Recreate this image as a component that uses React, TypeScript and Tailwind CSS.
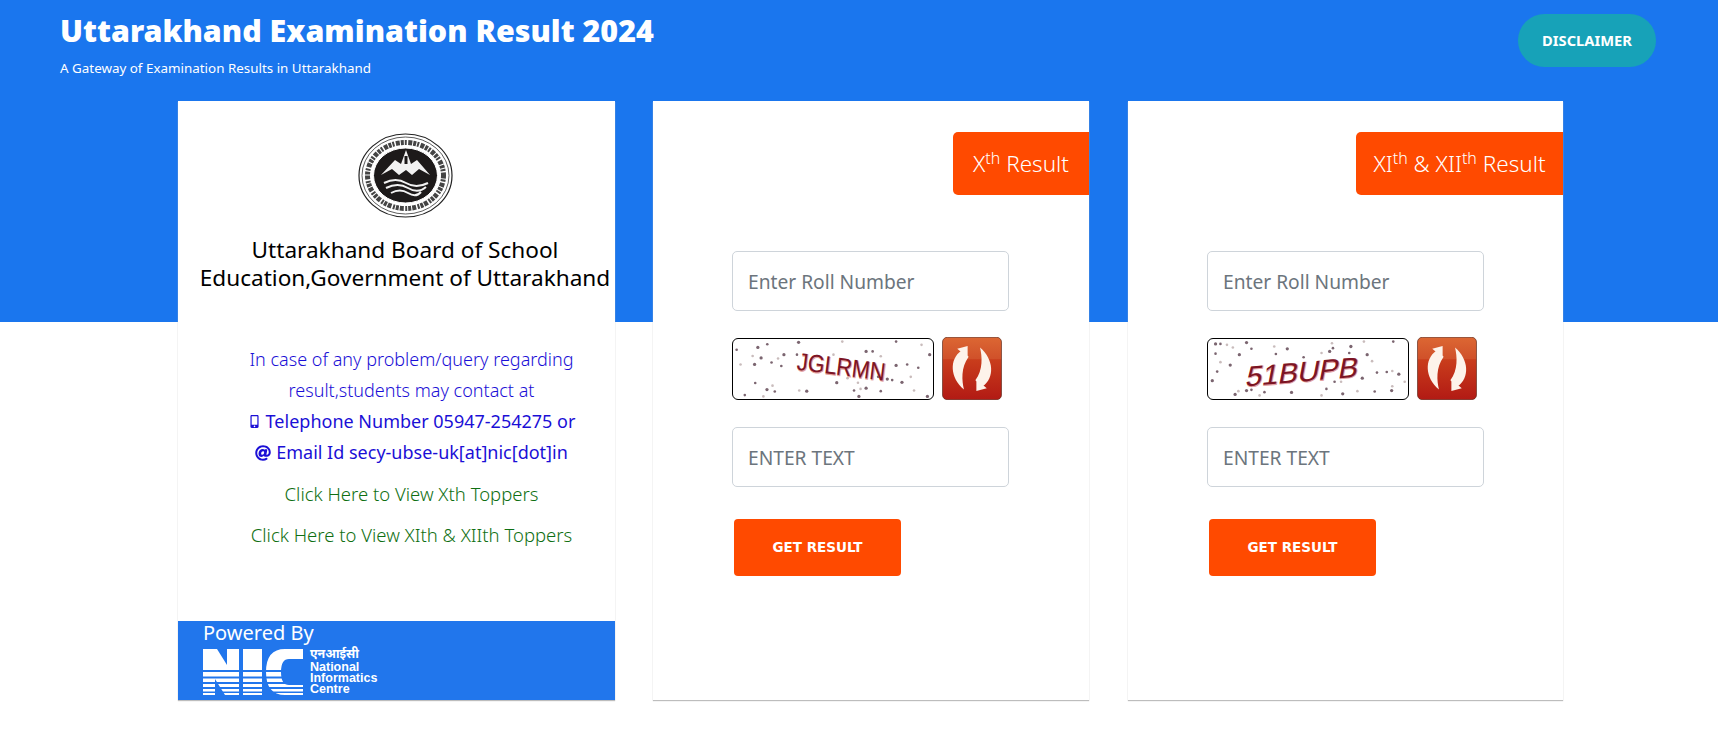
import React from 'react';
import { FaAt, FaMobileAlt } from 'react-icons/fa';

const bodyFont = 'font-["Noto_Sans",sans-serif]';

const captchaOne: [number, number][] = [
  [108, 78], [43, 85], [92, 104], [118, 110], [150, 124], [170, 112], [188, 100], [228, 100], [55, 130], [98, 130],
  [180, 135], [367, 60], [233, 62], [137, 68], [340, 100], [440, 90], [460, 90], [485, 105], [532, 133], [566, 130],
  [577, 168], [550, 185], [477, 168], [415, 186], [350, 186], [100, 187], [153, 195], [136, 207], [160, 213], [235, 210],
  [258, 212], [68, 224], [125, 228], [418, 228], [485, 212], [423, 205], [440, 203], [403, 210], [587, 210], [628, 228],
  [600, 140], [383, 172], [505, 175], [532, 60], [610, 70], [635, 100], [520, 178],
];

const captchaTwo: [number, number][] = [
  [55, 67], [70, 67], [90, 70], [150, 63], [165, 82], [108, 78], [128, 100], [55, 97], [70, 123], [100, 132],
  [240, 98], [235, 75], [275, 82], [325, 108], [380, 95], [405, 90], [415, 80], [412, 65], [470, 75], [465, 95],
  [510, 60], [520, 100], [600, 60], [535, 120], [505, 172], [580, 153], [597, 150], [617, 160], [550, 155], [635, 183],
  [45, 180], [60, 152], [597, 197], [595, 210], [543, 213], [490, 212], [445, 220], [395, 205], [380, 225], [288, 216],
  [205, 215], [190, 225], [150, 210], [165, 208], [125, 212], [115, 222], [420, 183], [440, 183],
];

function Emblem() {
  return (
    <svg width="95" height="85" viewBox="0 0 95 85" className="block">
      <ellipse cx="47.5" cy="42.5" rx="46.5" ry="41.5" fill="#fff" stroke="#222" strokeWidth="1.2" />
      <ellipse cx="47.5" cy="42.5" rx="43.5" ry="38.5" fill="none" stroke="#333" strokeWidth="0.8" />
      <ellipse cx="47.5" cy="42.5" rx="38" ry="33" fill="none" stroke="#444" strokeWidth="5" strokeDasharray="3 1 2 1.5 4 1" />
      <ellipse cx="47.5" cy="42.5" rx="32" ry="27.5" fill="#1d1a1a" stroke="#fff" strokeWidth="1" />
      <path d="M23 42 L37 27 L43 31 L48 17 L53 31 L59 27 L72 42 L61 36 L54 42 L48 37 L41 42 L34 36 Z" fill="#f2f2f2" />
      <path d="M46.5 23 h3 v8 h-3 z" fill="#1d1a1a" />
      <path d="M26 50 Q38 44 48 50 T70 50 M28 55 Q40 49 50 55 T68 54 M33 60 Q42 55 50 60 T63 59" fill="none" stroke="#f2f2f2" strokeWidth="2" />
    </svg>
  );
}

function NicLogo() {
  return (
    <svg width="100" height="46" viewBox="0 0 100 46" className="block">
      <defs>
        <clipPath id="nic-letters">
          <path d="M0 0 H14 L24 16 V0 H36 V46 H22 L12 30 V46 H0 Z" />
          <rect x="40" y="0" width="19" height="46" />
          <path d="M100 0 V10 H86 Q78 10 78 23 Q78 36 86 36 H100 V46 H82 Q63 46 63 23 Q63 0 82 0 Z" />
        </clipPath>
      </defs>
      <g clipPath="url(#nic-letters)">
        <rect width="100" height="21" fill="#fff" />
        <rect y="23" width="100" height="4.5" fill="#fff" />
        <rect y="29.5" width="100" height="3.5" fill="#fff" />
        <rect y="35" width="100" height="3" fill="#fff" />
        <rect y="40" width="100" height="2.5" fill="#fff" />
        <rect y="44" width="100" height="2" fill="#fff" />
      </g>
    </svg>
  );
}

function RefreshIcon() {
  return (
    <svg width="60" height="63" viewBox="667 49 178 188" className="block">
      <defs>
        <linearGradient id="refresh-bg" x1="0" y1="0" x2="0" y2="1">
          <stop offset="0" stopColor="#dc6733" />
          <stop offset="0.34" stopColor="#d0512a" />
          <stop offset="0.36" stopColor="#c93d1c" />
          <stop offset="1" stopColor="#b21a14" />
        </linearGradient>
      </defs>
      <rect x="668" y="50" width="176" height="186" rx="14" fill="url(#refresh-bg)" stroke="#5d2a1c" strokeWidth="2" />
      <g fill="#fdf3ea">
        <path d="M724 90 C688 115 690 170 732 206 C726 180 722 140 746 108 Z" />
        <path d="M712 84 L743 76 L743 110 Z" />
        <g transform="rotate(180 756 143)">
          <path d="M724 90 C688 115 690 170 732 206 C726 180 722 140 746 108 Z" />
          <path d="M712 84 L743 76 L743 110 Z" />
        </g>
      </g>
    </svg>
  );
}

function Captcha({ dots, text, kind }: { dots: [number, number][]; text: string; kind: 'plain' | 'italic' }) {
  return (
    <div className="w-[202px] h-[62px] rounded-md border border-black bg-white overflow-hidden">
      <svg width="200" height="60" viewBox="37 52 603 184" className="block">
        {dots.map(([x, y], i) => (
          <circle key={i} cx={x} cy={y} r={i % 3 === 0 ? 5 : 4} fill={i % 3 === 2 ? '#c9bcbc' : '#7b6570'} />
        ))}
        {kind === 'plain' ? (
          <g transform="translate(364 137) rotate(7)" textAnchor="middle" className='font-["Liberation_Sans",sans-serif]'>
            <text x="2" y="28" fontSize="76" textLength="272" lengthAdjust="spacingAndGlyphs" fill="#e4a0a0" stroke="#e4a0a0" strokeWidth="3">{text}</text>
            <text x="0" y="26" fontSize="76" textLength="272" lengthAdjust="spacingAndGlyphs" fill="#7c1424">{text}</text>
          </g>
        ) : (
          <g transform="translate(322 152) rotate(-5) skewX(-16)" textAnchor="middle" className='font-["Liberation_Sans",sans-serif]'>
            <text x="2" y="32" fontSize="86" textLength="345" lengthAdjust="spacingAndGlyphs" fill="#e4a0a0" stroke="#e4a0a0" strokeWidth="3">{text}</text>
            <text x="0" y="30" fontSize="86" textLength="345" lengthAdjust="spacingAndGlyphs" fill="#7c1424">{text}</text>
          </g>
        )}
      </svg>
    </div>
  );
}

function ResultCard({ tab, cardClass, tabWidth, dots, code, kind }: { tab: React.ReactNode; cardClass: string; tabWidth: string; dots: [number, number][]; code: string; kind: 'plain' | 'italic' }) {
  return (
    <div className={`${cardClass} h-[599px] bg-white flex flex-col shadow-[0_1px_1px_#bdbdbd]`}>
      <div className={`mt-[31px] h-[63px] self-end ${tabWidth} bg-[#ff4a00] rounded-l-[5px] flex items-center justify-center text-white text-[22.5px] font-light`}>
        <span>{tab}</span>
      </div>
      <div className="pl-[79px] pt-[56px] flex flex-col items-start">
        <input
          placeholder="Enter Roll Number"
          className="w-[277px] h-[60px] px-[15px] border border-[#ced4da] rounded-[5px] text-[19.2px] placeholder:text-[#6c757d] outline-none"
        />
        <div className="mt-[26px] flex items-center gap-2">
          <Captcha dots={dots} text={code} kind={kind} />
          <RefreshIcon />
        </div>
        <input
          placeholder="ENTER TEXT"
          className="mt-[27px] w-[277px] h-[60px] px-[15px] border border-[#ced4da] rounded-[5px] text-[19.2px] placeholder:text-[#6c757d] outline-none"
        />
        <button className='mt-[32px] ml-[2px] w-[167px] h-[57px] bg-[#ff4a00] rounded text-white text-[13.5px] font-bold font-["DejaVu_Sans",sans-serif]'>
          GET RESULT
        </button>
      </div>
    </div>
  );
}

export default function App() {
  return (
    <div className={`min-h-[750px] bg-white ${bodyFont}`}>
      <header className="h-[322px] bg-[#1a76ee] pl-[60px] pr-[62px] flex items-start justify-between text-white">
        <div className="pt-[12px]">
          <h1 className="text-[30.4px] leading-[38px] font-black">Uttarakhand Examination Result 2024</h1>
          <p className="mt-[9px] text-[13.4px] leading-[18px]">A Gateway of Examination Results in Uttarakhand</p>
        </div>
        <button className="mt-[14px] w-[138px] h-[53px] rounded-full bg-[#17a2b8] text-[14.7px] font-bold">DISCLAIMER</button>
      </header>

      <main className="-mt-[221px] pl-[178px] flex items-start gap-[38px]">
        <div className="w-[437px] h-[599px] bg-white flex flex-col shadow-[0_1px_1px_#bdbdbd]">
          <div className="pl-[17px] flex flex-col items-center">
            <div className="mt-[32px]">
              <Emblem />
            </div>
            <h2 className="mt-[18px] text-center text-[22.6px] leading-[28px] text-black whitespace-nowrap">
              Uttarakhand Board of School
              <br />
              Education,Government of Uttarakhand
            </h2>
          </div>
          <div className="pl-[30px]">
            <div className="mt-[52px] text-center text-[18px] leading-[31px] text-[#1b0fd6]">
              <p className="font-light">In case of any problem/query regarding</p>
              <p className="font-light">result,students may contact at</p>
              <p className="flex items-center justify-center gap-[5px]">
                <FaMobileAlt className="text-[13px]" />
                Telephone Number 05947-254275 or
              </p>
              <p className="flex items-center justify-center gap-[5px]">
                <FaAt className="text-[16px]" />
                Email Id secy-ubse-uk[at]nic[dot]in
              </p>
            </div>
            <div className="mt-[12px] text-center text-[18.5px] leading-[27px] font-light text-[#0f6f12] flex flex-col gap-[14px]">
              <p>Click Here to View Xth Toppers</p>
              <p>Click Here to View XIth &amp; XIIth Toppers</p>
            </div>
          </div>
          <div className="mt-auto w-full h-[79px] bg-[#2176ec] pl-[25px] text-white">
            <p className="text-[20px] leading-[24px]">Powered By</p>
            <div className="mt-[4px] flex items-start gap-[7px]">
              <NicLogo />
              <div className='font-["Liberation_Sans",sans-serif] font-bold text-[12.5px] leading-[11px]'>
                <p className='font-["Noto_Sans_Devanagari","Noto_Sans",sans-serif] leading-[13px]'>एनआईसी</p>
                <p>National</p>
                <p>Informatics</p>
                <p>Centre</p>
              </div>
            </div>
          </div>
        </div>

        <ResultCard
          cardClass="w-[436px]"
          tabWidth="w-[136px]"
          tab={<>X<sup className="text-[16px]">th</sup> Result</>}
          dots={captchaOne}
          code="JGLRMN"
          kind="plain"
        />
        <ResultCard
          cardClass="w-[435px] ml-[1px]"
          tabWidth="w-[207px]"
          tab={<>XI<sup className="text-[16px]">th</sup> &amp; XII<sup className="text-[16px]">th</sup> Result</>}
          dots={captchaTwo}
          code="51BUPB"
          kind="italic"
        />
      </main>
    </div>
  );
}
